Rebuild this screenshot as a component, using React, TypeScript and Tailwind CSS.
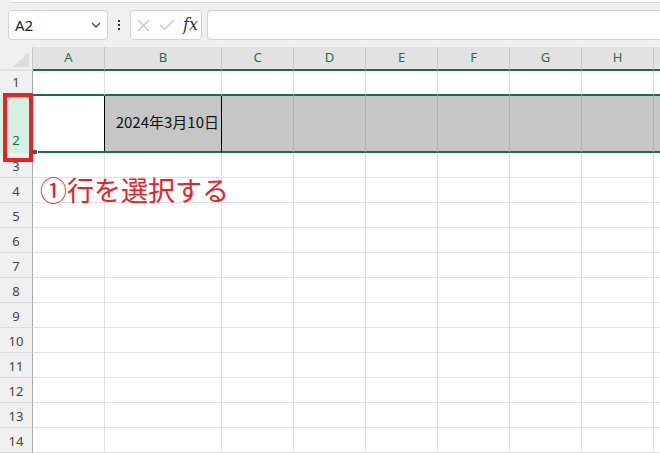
import React from "react";

const cols = [
  { l: "A", w: "w-[72px]" },
  { l: "B", w: "w-[117px]" },
  { l: "C", w: "w-[72px]" },
  { l: "D", w: "w-[72px]" },
  { l: "E", w: "w-[72px]" },
  { l: "F", w: "w-[72px]" },
  { l: "G", w: "w-[72px]" },
  { l: "H", w: "w-[72px]" },
  { l: "", w: "w-[72px]" },
];

const uiFont = { fontFamily: '"Noto Sans", "Noto Sans CJK JP", sans-serif' };
const jpFont = { fontFamily: '"Noto Sans CJK JP", "Noto Sans", sans-serif' };

function RowHeader({ n, h, selected }: { n: number; h: string; selected?: boolean }) {
  return (
    <div
      className={`${h} w-[33px] shrink-0 border-r border-r-[#a8a8a8] flex items-end justify-center pb-[3px] text-[13px] leading-[16px] ${
        selected ? "bg-[#d3f0e0] text-[#1e7145] border-b-2 border-b-[#d3f0e0]" : "bg-[#f0f0f0] text-[#444] border-b border-b-[#dcdcdc]"
      }`}
      style={uiFont}
    >
      {n}
    </div>
  );
}

export default function App() {
  const rest = Array.from({ length: 12 }, (_, i) => i + 3);
  return (
    <div className="relative w-[660px] h-[453px] overflow-hidden bg-white" style={uiFont}>
      {/* Formula bar */}
      <div className="h-[47px] bg-[#f0f0f0] relative flex items-start pt-[10px] pl-[8px] gap-0">
        <div className="absolute left-[10px] right-0 top-0 h-[3px] bg-white border-b border-[#d6d6d6] rounded-bl-[4px]" />
        <div className="w-[100px] h-[30px] bg-white border border-[#d4d4d4] rounded-[4px] flex items-center justify-between pl-[6px] pr-[6px] shrink-0">
          <span className="text-[15px] text-[#222] leading-none">A2</span>
          <svg width="10" height="6" viewBox="0 0 10 6" fill="none">
            <path d="M1 1 L5 5 L9 1" stroke="#444" strokeWidth="1.3" />
          </svg>
        </div>
        <div className="w-[22px] h-[30px] flex flex-col items-center justify-center gap-[2px] shrink-0">
          <div className="w-[2px] h-[2px] bg-[#333]" />
          <div className="w-[2px] h-[2px] bg-[#333]" />
          <div className="w-[2px] h-[2px] bg-[#333]" />
        </div>
        <div className="w-[72px] h-[30px] bg-white border border-[#d4d4d4] rounded-[4px] flex items-center pl-[6px] gap-[9px] shrink-0">
          <svg width="13" height="13" viewBox="0 0 13 13" fill="none">
            <path d="M1 1 L12 12 M12 1 L1 12" stroke="#c4c4c4" strokeWidth="1.2" />
          </svg>
          <svg width="16" height="12" viewBox="0 0 16 12" fill="none">
            <path d="M1 6 L5.5 10.5 L15 1" stroke="#c4c4c4" strokeWidth="1.2" />
          </svg>
          <span className="text-[16px] italic text-[#333] leading-none -ml-[1px]" style={{ fontFamily: '"DejaVu Serif", "Liberation Serif", serif' }}>
            fx
          </span>
        </div>
        <div className="ml-[5px] flex-1 h-[30px] bg-white border border-[#d4d4d4] rounded-l-[4px] border-r-0" />
      </div>

      {/* Column header row */}
      <div className="flex h-[24px]">
        <div className="w-[33px] shrink-0 bg-[#f0f0f0] border-r border-r-[#c8c8c8] border-b-2 border-b-[#e0e0e0] relative">
          <svg className="absolute left-[13px] top-[5px]" width="16" height="15" viewBox="0 0 16 15">
            <polygon points="16,0 16,15 0,15" fill="#dcdcdc" />
          </svg>
        </div>
        {cols.map((c, i) => (
          <div
            key={i}
            className={`${c.w} shrink-0 bg-[#e2e2e2] border-r border-r-[#c6c6c6] border-b-2 border-b-[#1e6b45] flex items-center justify-center text-[13px] text-[#1e7145]`}
          >
            {c.l}
          </div>
        ))}
      </div>

      {/* Row 1 */}
      <div className="flex h-[25px]">
        <div className="h-[25px] w-[33px] shrink-0 bg-[#f0f0f0] border-r border-r-[#a8a8a8] flex items-center justify-center text-[13px] text-[#444] pb-[2px]">
          1
        </div>
        {cols.map((c, i) => (
          <div key={i} className={`${c.w} shrink-0 border-r border-r-[#e1e1e1] border-b-2 border-b-[#1e6b45]`} />
        ))}
      </div>

      {/* Row 2 (selected) */}
      <div className="flex h-[57px]">
        <RowHeader n={2} h="h-[57px]" selected />
        {cols.map((c, i) => {
          if (c.l === "A")
            return <div key={i} className={`${c.w} shrink-0 bg-white border-r border-r-black border-b-2 border-b-white`} />;
          if (c.l === "B")
            return (
              <div
                key={i}
                className={`${c.w} shrink-0 bg-[#c6c6c6] border-r border-r-black border-b-2 border-b-[#1e6b45] flex items-center justify-end pr-[2px] pb-[2px] text-[15px] text-[#111]`}
                style={jpFont}
              >
                2024年3月10日
              </div>
            );
          return <div key={i} className={`${c.w} shrink-0 bg-[#c6c6c6] border-r border-r-[#b0b0b0] border-b-2 border-b-[#1e6b45]`} />;
        })}
      </div>

      {/* Rows 3-14 */}
      {rest.map((n) => (
        <div key={n} className="flex h-[25px]">
          <RowHeader n={n} h="h-[25px]" />
          {cols.map((c, i) => (
            <div key={i} className={`${c.w} shrink-0 border-r border-r-[#e1e1e1] border-b border-b-[#e1e1e1]`} />
          ))}
        </div>
      ))}

      {/* A2 bottom green line segment & fill handle */}
      <div className="absolute left-[38px] top-[151px] w-[67px] h-[2px] bg-[#1e6b45]" />
      <div className="absolute left-[33px] top-[150px] w-[4px] h-[4px] bg-[#1e6b45]" />

      {/* Red highlight box */}
      <div className="absolute left-[3px] top-[93px] w-[30px] h-[69px] border-[4px] border-[#e8202a]" />

      {/* Annotation */}
      <div
        className="absolute left-[40px] top-[176px] text-[27px] leading-[27px] text-[#e8202a] whitespace-nowrap"
        style={jpFont}
      >
        ①行を選択する
      </div>
    </div>
  );
}
